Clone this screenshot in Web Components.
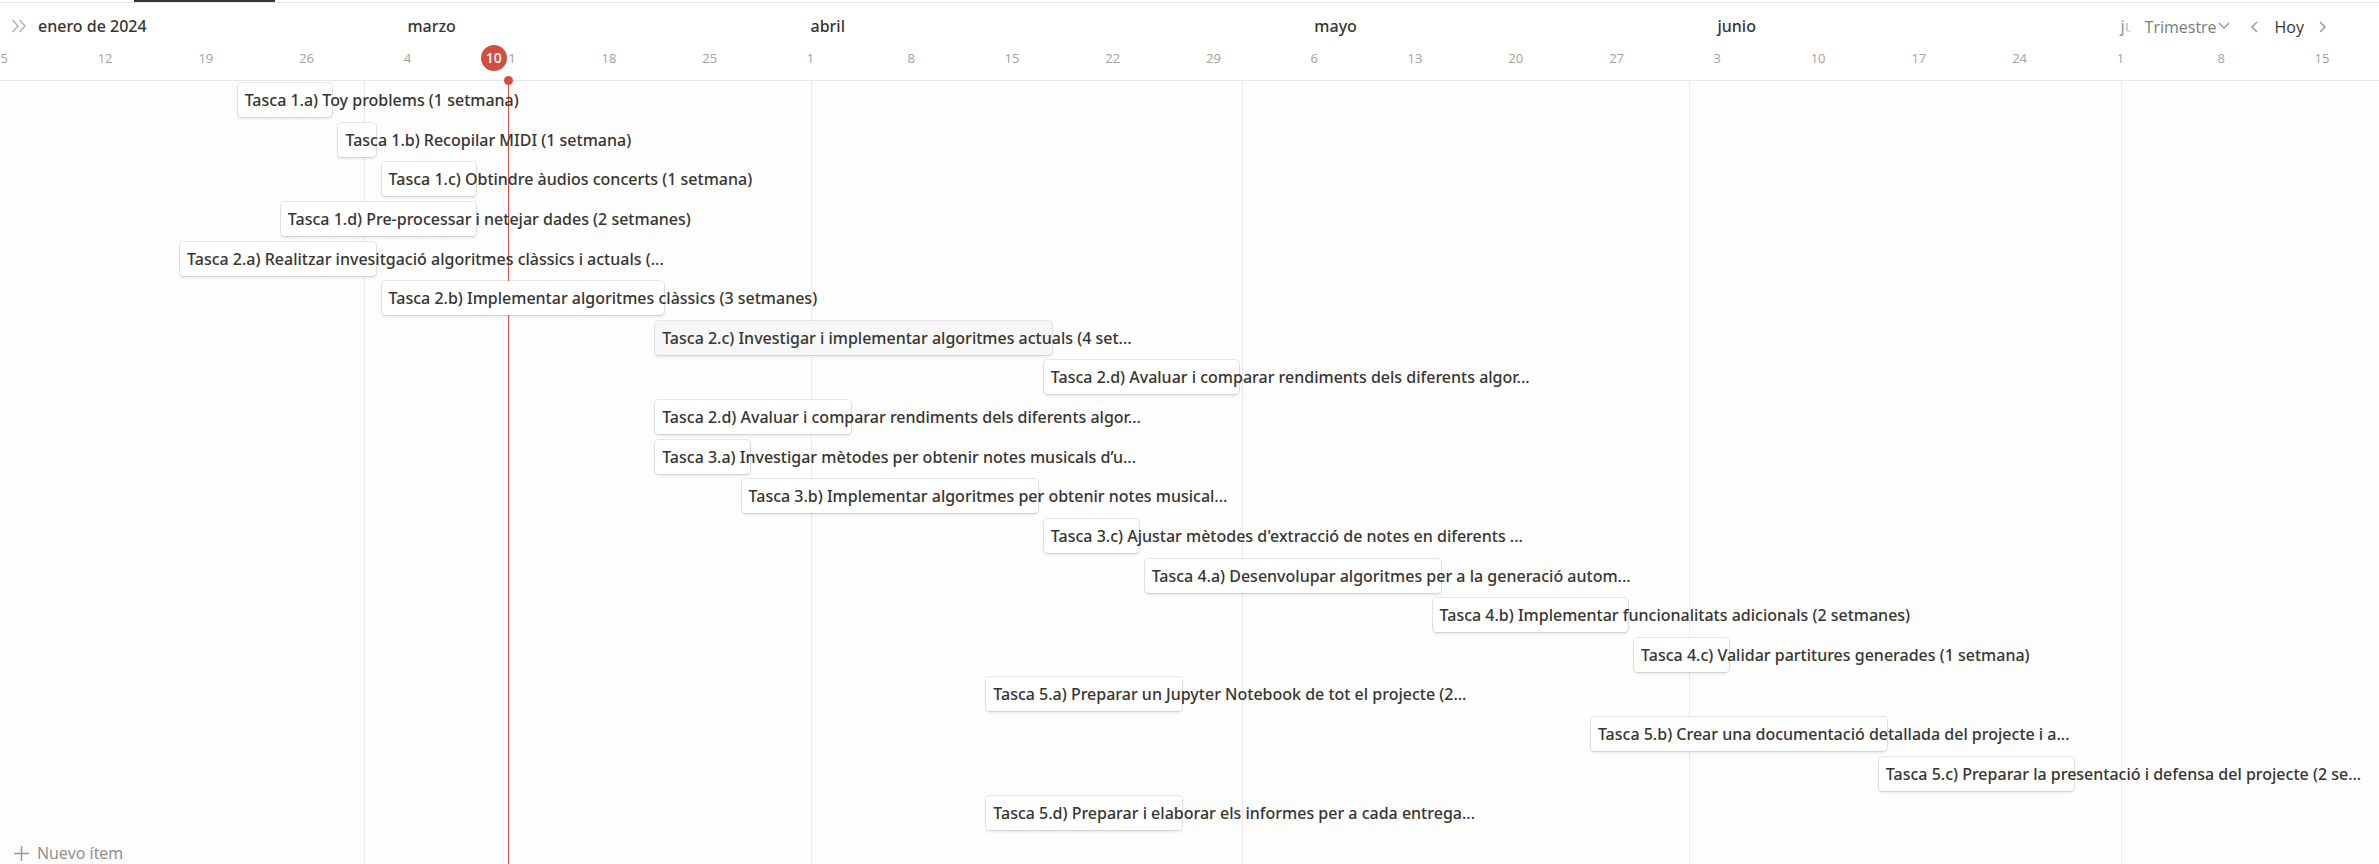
<!DOCTYPE html>
<html lang="es">
<head>
<meta charset="utf-8">
<title>Cronograma</title>
<style>
  html, body { margin: 0; height: 100%; }
  body { font-family: "Open Sans", "Noto Sans", sans-serif; font-size: 16px; color: #37352f; background: #fff; }
</style>
</head>
<body>
<timeline-view>
  <timeline-header slot="header"></timeline-header>
  <timeline-item start="2024-02-21" days="7">Tasca 1.a) Toy problems (1 setmana)</timeline-item>
  <timeline-item start="2024-02-28" days="3">Tasca 1.b) Recopilar MIDI (1 setmana)</timeline-item>
  <timeline-item start="2024-03-02" days="7">Tasca 1.c) Obtindre àudios concerts (1 setmana)</timeline-item>
  <timeline-item start="2024-02-24" days="14">Tasca 1.d) Pre-processar i netejar dades (2 setmanes)</timeline-item>
  <timeline-item start="2024-02-17" days="14">Tasca 2.a) Realitzar invesitgació algoritmes clàssics i actuals (...</timeline-item>
  <timeline-item start="2024-03-02" days="20">Tasca 2.b) Implementar algoritmes clàssics (3 setmanes)</timeline-item>
  <timeline-item start="2024-03-21" days="28" active>Tasca 2.c) Investigar i implementar algoritmes actuals (4 set...</timeline-item>
  <timeline-item start="2024-04-17" days="14">Tasca 2.d) Avaluar i comparar rendiments dels diferents algor...</timeline-item>
  <timeline-item start="2024-03-21" days="14">Tasca 2.d) Avaluar i comparar rendiments dels diferents algor...</timeline-item>
  <timeline-item start="2024-03-21" days="7">Tasca 3.a) Investigar mètodes per obtenir notes musicals d’u...</timeline-item>
  <timeline-item start="2024-03-27" days="21">Tasca 3.b) Implementar algoritmes per obtenir notes musical...</timeline-item>
  <timeline-item start="2024-04-17" days="7">Tasca 3.c) Ajustar mètodes d'extracció de notes en diferents ...</timeline-item>
  <timeline-item start="2024-04-24" days="21">Tasca 4.a) Desenvolupar algoritmes per a la generació autom...</timeline-item>
  <timeline-item start="2024-05-14" days="14">Tasca 4.b) Implementar funcionalitats adicionals (2 setmanes)</timeline-item>
  <timeline-item start="2024-05-28" days="7">Tasca 4.c) Validar partitures generades (1 setmana)</timeline-item>
  <timeline-item start="2024-04-13" days="14">Tasca 5.a) Preparar un Jupyter Notebook de tot el projecte (2...</timeline-item>
  <timeline-item start="2024-05-25" days="21">Tasca 5.b) Crear una documentació detallada del projecte i a...</timeline-item>
  <timeline-item start="2024-06-14" days="14">Tasca 5.c) Preparar la presentació i defensa del projecte (2 se...</timeline-item>
  <timeline-item start="2024-04-13" days="14">Tasca 5.d) Preparar i elaborar els informes per a cada entrega...</timeline-item>
</timeline-view>

<script>
  // Visible range: opens 0.3 days before 5 February and shows 165.25 days.
  const FIRST = Date.parse('2024-02-05');
  const LEAD = 0.3;
  const SPAN = 165.25;
  const dayOf = iso => (Date.parse(iso) - FIRST) / 864e5 + LEAD;
  const pct = days => (days / SPAN * 100) + '%';

  class TimelineHeader extends HTMLElement {
    constructor() {
      super();
      const marks = ['2024-03-04', '2024-04-01', '2024-05-06', '2024-06-03', '2024-07-01'];
      const names = ['marzo', 'abril', 'mayo', 'junio', 'julio'];
      const months = names.map((name, i) => {
        const end = marks[i + 1] ? dayOf(marks[i + 1]) : SPAN;
        return `<span class="month" style="width:${pct(end - dayOf(marks[i]))}">${name}</span>`;
      }).join('');
      let weeks = '';
      for (let i = 0; i < 24; i++) {
        const d = new Date(FIRST + i * 7 * 864e5).getUTCDate();
        weeks += `<span class="week">${d}</span>`;
      }
      this.attachShadow({ mode: 'open' }).innerHTML = `
        <style>
          :host { display: block; position: relative; background: #fff; border-bottom: 1px solid #e6e6e5; }
          .tabs { height: 2px; padding-left: 134px; border-bottom: 1px solid #e6e6e5; }
          .tab { display: block; width: 141px; height: 2px; background: #37352f; }
          .months { display: flex; height: 40px; padding-top: 3px; line-height: 40px; overflow: hidden; font-family: "Noto Sans", sans-serif; font-weight: 500; white-space: nowrap; }
          .months > * { flex: none; }
          .first { display: flex; width: ${pct(dayOf(marks[0]))}; }
          button { font: inherit; color: inherit; background: none; border: 0; margin: 0; padding: 0; display: grid; place-items: center; }
          .expand { width: 38px; }
          .weeks { display: flex; height: 34px; line-height: 24px; margin-left: ${pct(LEAD - 3.5)}; overflow: hidden; font-size: 13px; color: #a3a29e; }
          .week { flex: none; width: ${7 / (SPAN + 3.5 - LEAD) * 100}%; text-align: center; }
          .today { position: absolute; left: ${pct(dayOf('2024-03-10'))}; top: 45px; width: 26px; height: 26px; margin-left: -13px; border-radius: 50%; background: #d44c42; color: #fff; font-size: 14px; font-weight: 600; line-height: 26px; text-align: center; }
          .controls { position: absolute; top: 7px; right: 39px; height: 40px; display: flex; align-items: center; padding-left: 34px; background: linear-gradient(to right, #fff0, #fff 22px); }
          .controls::after { content: ""; position: absolute; left: 100%; width: 39px; height: 40px; background: #fff; }
          .scale { position: relative; display: flex; align-items: center; color: #7d7c78; }
          select { appearance: none; font: inherit; color: inherit; background: none; border: 0; padding: 0 12px 0 0; margin: 0; }
          .scale svg { position: absolute; right: 0; top: 4px; pointer-events: none; }
          .prev { width: 40px; height: 30px; margin-left: 5px; }
          .next { width: 36px; height: 30px; }
          svg { display: block; fill: none; stroke: #9b9a97; stroke-width: 1.5; }
          .expand svg { stroke: #b4b3b0; }
        </style>
        <div class="tabs"><span class="tab"></span></div>
        <div class="months">
          <div class="first">
            <button class="expand" aria-label="Mostrar tabla"><svg width="16" height="14" viewBox="0 0 16 14"><path d="M1.500 1l5.500 6-5.500 6M8.500 1l5.500 6-5.500 6"/></svg></button>
            <span>enero de 2024</span>
          </div>${months}
        </div>
        <div class="weeks">${weeks}</div>
        <span class="today">10</span>
        <div class="controls">
          <label class="scale"><select aria-label="Escala"><option>Trimestre</option></select><svg width="12" height="12" viewBox="0 0 12 12"><path d="M1 3l5 5 5-5"/></svg></label>
          <button class="prev" aria-label="Anterior"><svg width="9" height="14" viewBox="0 0 9 14"><path d="M7 2l-5 5 5 5"/></svg></button>
          <button>Hoy</button>
          <button class="next" aria-label="Siguiente"><svg width="9" height="14" viewBox="0 0 9 14"><path d="M2 2l5 5-5 5"/></svg></button>
        </div>`;
    }
  }

  class TimelineItem extends HTMLElement {
    constructor() {
      super();
      this.attachShadow({ mode: 'open' }).innerHTML = `
        <style>
          :host { display: block; min-width: 0; }
          .span { box-sizing: border-box; padding: 2px 3px 0; }
          .bar { box-sizing: border-box; height: 34px; padding-left: 7px; border-radius: 4px; background: #fff; box-shadow: 0 0 0 1px #0f0f0f18, 0 2px 3px #0f0f0f18; line-height: 34px; font-family: "Noto Sans", sans-serif; font-weight: 500; white-space: nowrap; }
          :host([active]) .bar { background: #f7f7f7; }
        </style>
        <div class="span"><div class="bar"><slot></slot></div></div>`;
    }
    connectedCallback() {
      const span = this.shadowRoot.querySelector('.span');
      span.style.marginLeft = pct(dayOf(this.getAttribute('start')));
      span.style.width = pct(Number(this.getAttribute('days')));
    }
  }

  class TimelineView extends HTMLElement {
    constructor() {
      super();
      const firsts = ['2024-03-01', '2024-04-01', '2024-05-01', '2024-06-01', '2024-07-01'];
      const columns = firsts.map((d, i) => {
        const end = firsts[i + 1] ? dayOf(firsts[i + 1]) : SPAN;
        return `<span class="month" style="width:${pct(end - dayOf(d))}"></span>`;
      }).join('');
      this.attachShadow({ mode: 'open' }).innerHTML = `
        <style>
          :host { display: flex; flex-direction: column; height: 100%; }
          .header { position: relative; z-index: 1; }
          .body { position: relative; flex: 1; min-height: 0; overflow: hidden; background: #fdfdfd; }
          .lines { position: absolute; inset: 0; display: flex; }
          .lines span { box-sizing: border-box; flex: none; }
          .before { width: ${pct(dayOf(firsts[0]))}; }
          .month { border-left: 1px solid #ebebea; }
          .now { position: absolute; top: 0; bottom: 0; left: ${pct(dayOf('2024-03-11'))}; width: 1px; background: #d44c42; }
          .dot { position: absolute; z-index: 2; top: 100%; left: ${pct(dayOf('2024-03-11'))}; width: 9px; height: 9px; margin: -5px 0 0 -4px; border-radius: 50%; background: #d44c42; }
          .rows { position: relative; display: grid; grid-template-rows: repeat(19, 1fr); height: 753px; }
          .new { position: relative; display: flex; align-items: center; gap: 8px; height: 38px; padding: 0 14px; border: 0; background: none; font: inherit; color: #8b8a86; }
          .new svg { fill: none; stroke: #9b9a97; stroke-width: 1.5; }
        </style>
        <div class="header"><slot name="header"></slot><span class="dot"></span></div>
        <div class="body">
          <div class="lines"><span class="before"></span>${columns}</div>
          <div class="now"></div>
          <div class="rows"><slot></slot></div>
          <button class="new"><svg width="15" height="15" viewBox="0 0 15 15"><path d="M7.500 0v15M0 7.500h15"/></svg>Nuevo ítem</button>
        </div>`;
    }
  }

  customElements.define('timeline-header', TimelineHeader);
  customElements.define('timeline-item', TimelineItem);
  customElements.define('timeline-view', TimelineView);
</script>
</body>
</html>
